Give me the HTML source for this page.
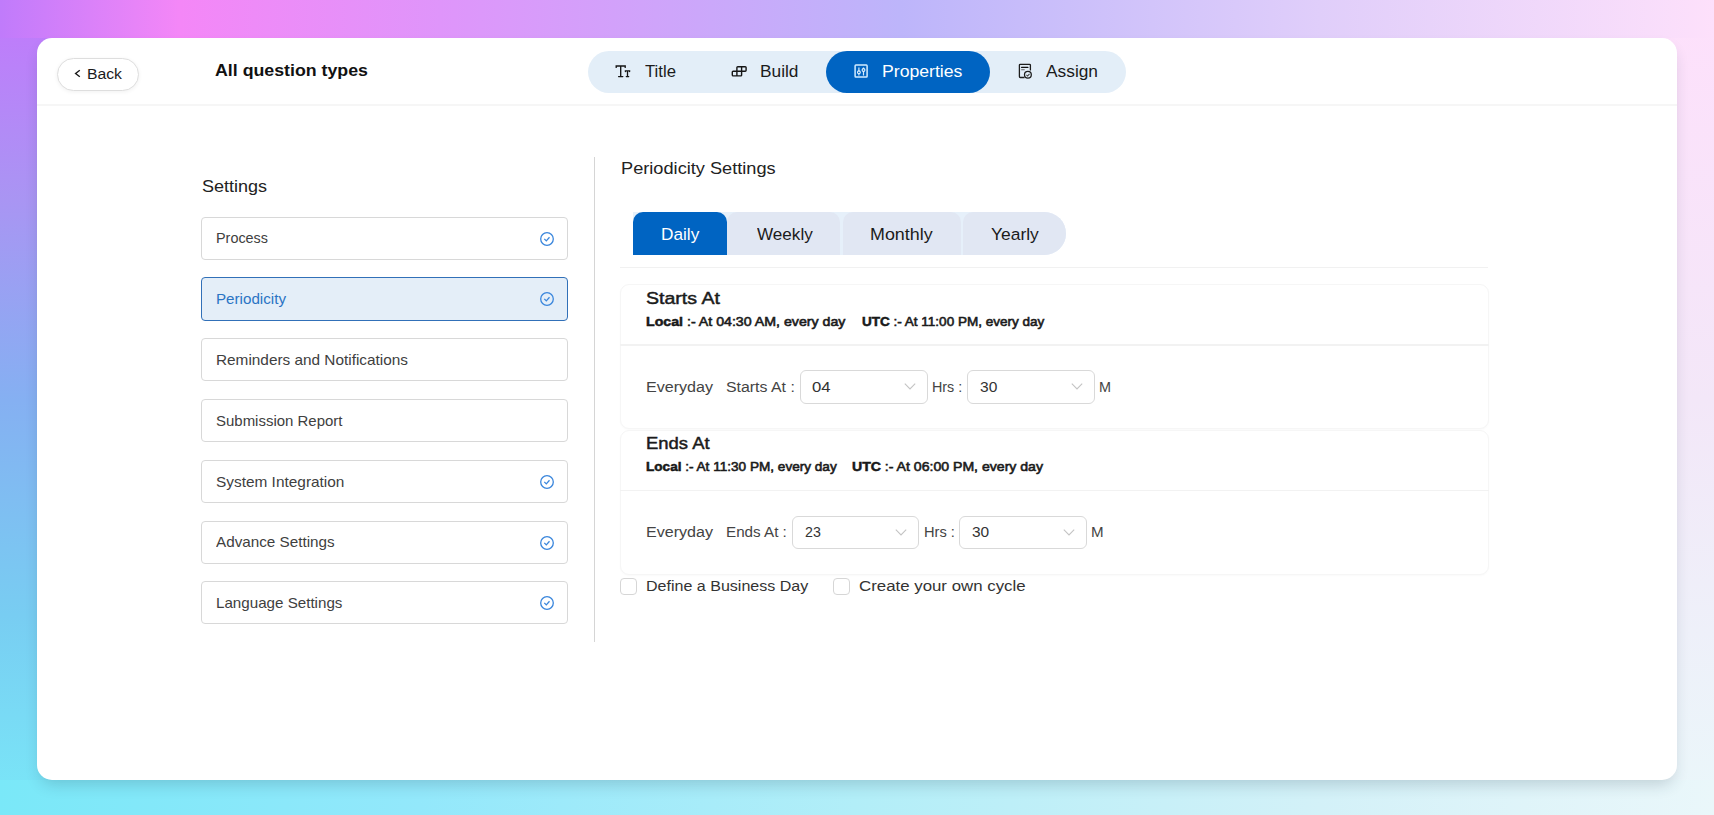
<!DOCTYPE html>
<html><head><meta charset="utf-8">
<style>
*{margin:0;padding:0;box-sizing:border-box}
html,body{width:1714px;height:815px;overflow:hidden}
body{position:relative;font-family:"Liberation Sans",sans-serif;background:#b9b5f5}
.a{position:absolute}
.t{position:absolute;white-space:nowrap;transform-origin:0 0}
#bgT{left:0;top:0;width:1714px;height:38px;background:linear-gradient(90deg,#c07bfb 0px,#f487f7 180px,#df95fa 440px,#bdb5fa 900px,#e0cefa 1320px,#fde0fb 1714px)}
#bgL{left:0;top:0;width:53px;height:815px;background:linear-gradient(180deg,#c07bfb 0px,#c07bfb 20px,#a995f3 200px,#85b0f2 400px,#78cdf2 615px,#7ae8f8 815px)}
#bgR{left:1661px;top:0;width:53px;height:815px;background:linear-gradient(180deg,#fde0fb 0px,#fde0fb 20px,#f3e7f8 400px,#eaf7fa 815px)}
#bgB{left:0;top:780px;width:1714px;height:35px;background:linear-gradient(90deg,#7ae8f8 0px,#93e8fb 420px,#b2eef8 855px,#d3f1f8 1320px,#eaf7fa 1714px)}
#card{left:37px;top:38px;width:1640px;height:742px;background:#fff;border-radius:15px;box-shadow:0 8px 16px -4px rgba(30,50,70,.2)}
.box{position:absolute;left:201px;width:367px;height:43px;border:1px solid #d8d8d8;border-radius:4px;background:#fff}
.sel{position:absolute;height:34px;width:128px;border:1px solid #d9d9d9;border-radius:6px;background:#fff}
.cb{position:absolute;width:17.2px;height:17.2px;border:1px solid #d6d6d6;border-radius:4px;background:#fff}
</style></head><body>
<div id="bgL" class="a"></div><div id="bgR" class="a"></div><div id="bgT" class="a"></div><div id="bgB" class="a"></div>
<div id="card" class="a"></div>
<!-- header -->
<div class="a" style="left:57.2px;top:58.3px;width:82.3px;height:33px;border:1px solid #dedede;border-radius:17px;box-shadow:0 1px 4px rgba(0,0,0,.06);background:#fff"></div>
<svg class="a" style="left:70px;top:66px" width="14" height="16" viewBox="0 0 14 16"><path d="M9.8 4.3 L5.6 7.5 L9.8 10.7" fill="none" stroke="#1b1b1b" stroke-width="1.4"/></svg>
<div class="a" style="left:37px;top:104px;width:1640px;height:2px;background:#f6f6f6"></div>
<div class="a" style="left:588px;top:51px;width:538px;height:42px;border-radius:21px;background:#e3eef8"></div>
<div class="a" style="left:826px;top:51px;width:164px;height:42px;border-radius:21px;background:#0064c2"></div>
<!-- title icon -->
<svg class="a" style="left:610px;top:60px" width="26" height="22" viewBox="0 0 26 22">
<path d="M6.2 7.4 V6 H15.2 V7.4 M10.7 6 V16.6 M8.6 16.6 H12.8" fill="none" stroke="#151515" stroke-width="1.35" stroke-linecap="round"/>
<path d="M15.4 11.6 V10.9 H19.6 V11.6 M17.5 10.9 V16.6 M16.3 16.6 H18.7" fill="none" stroke="#151515" stroke-width="1.3" stroke-linecap="round"/>
</svg>
<!-- build icon -->
<svg class="a" style="left:726px;top:60px" width="26" height="22" viewBox="0 0 26 22">
<path d="M10.9 11.2 V7.6 Q10.9 6.7 11.8 6.7 H19.2 Q20.1 6.7 20.1 7.6 V10.3 Q20.1 11.2 19.2 11.2 H15.6 M15.6 6.7 V15.2 Q15.6 15.9 14.8 15.9 H7.2 Q6.3 15.9 6.3 15 V12.1 Q6.3 11.2 7.2 11.2 H15.6 M10.9 11.2 V15.9" fill="none" stroke="#151515" stroke-width="1.4"/>
</svg>
<!-- properties icon -->
<svg class="a" style="left:848px;top:60px" width="26" height="22" viewBox="0 0 26 22">
<rect x="7.1" y="5.1" width="12" height="12" rx="0.8" fill="none" stroke="#d2ebff" stroke-width="1.5"/>
<path d="M10.9 7.4 V15.5 M15.5 7.4 V15.5" stroke="#d2ebff" stroke-width="1.2"/>
<circle cx="10.9" cy="12.3" r="1.4" fill="#0064c2" stroke="#e8f6ff" stroke-width="1.1"/>
<circle cx="15.5" cy="10" r="1.4" fill="#0064c2" stroke="#e8f6ff" stroke-width="1.1"/>
</svg>
<!-- assign icon -->
<svg class="a" style="left:1012px;top:60px" width="26" height="22" viewBox="0 0 26 22">
<path d="M12.5 17.5 H8.3 Q7.4 17.5 7.4 16.6 V5.1 Q7.4 4.3 8.3 4.3 H17.5 Q18.4 4.3 18.4 5.1 V10.6" fill="none" stroke="#1d1d1d" stroke-width="1.3"/>
<path d="M9.6 7.4 H15.9" stroke="#111" stroke-width="1.2" stroke-linecap="round"/>
<path d="M9.6 9.8 H12.3" stroke="#666" stroke-width="1.1" stroke-linecap="round"/>
<circle cx="15.9" cy="14.8" r="3.4" fill="#e3eef8" stroke="#1d1d1d" stroke-width="1.3"/>
<path d="M14.4 14.9 L15.6 16 L17.5 13.9" fill="none" stroke="#444" stroke-width="1.1"/>
</svg>
<!-- left settings -->
<div class="a" style="left:594px;top:156.8px;width:1px;height:485px;background:#d5d5d5"></div>
<div class="box" style="top:216.5px"></div>
<div class="box" style="top:277px;height:44px;background:#e4eef8;border-color:#3170b8"></div>
<div class="box" style="top:338px"></div>
<div class="box" style="top:399px"></div>
<div class="box" style="top:460px"></div>
<div class="box" style="top:520.5px"></div>
<div class="box" style="top:581px"></div>
<svg class="a" style="left:538px;top:229.8px" width="18" height="18" viewBox="0 0 18 18"><circle cx="9" cy="9" r="6.3" fill="none" stroke="#3a86dc" stroke-width="1.3"/><path d="M6.3 8.9 L8.3 10.9 L11.5 7.3" fill="none" stroke="#3a86dc" stroke-width="1.3"/></svg>
<svg class="a" style="left:538px;top:290.3px" width="18" height="18" viewBox="0 0 18 18"><circle cx="9" cy="9" r="6.3" fill="none" stroke="#3a86dc" stroke-width="1.3"/><path d="M6.3 8.9 L8.3 10.9 L11.5 7.3" fill="none" stroke="#3a86dc" stroke-width="1.3"/></svg>
<svg class="a" style="left:538px;top:473.3px" width="18" height="18" viewBox="0 0 18 18"><circle cx="9" cy="9" r="6.3" fill="none" stroke="#3a86dc" stroke-width="1.3"/><path d="M6.3 8.9 L8.3 10.9 L11.5 7.3" fill="none" stroke="#3a86dc" stroke-width="1.3"/></svg>
<svg class="a" style="left:538px;top:533.8px" width="18" height="18" viewBox="0 0 18 18"><circle cx="9" cy="9" r="6.3" fill="none" stroke="#3a86dc" stroke-width="1.3"/><path d="M6.3 8.9 L8.3 10.9 L11.5 7.3" fill="none" stroke="#3a86dc" stroke-width="1.3"/></svg>
<svg class="a" style="left:538px;top:594.3px" width="18" height="18" viewBox="0 0 18 18"><circle cx="9" cy="9" r="6.3" fill="none" stroke="#3a86dc" stroke-width="1.3"/><path d="M6.3 8.9 L8.3 10.9 L11.5 7.3" fill="none" stroke="#3a86dc" stroke-width="1.3"/></svg>

<!-- right -->
<div class="a" style="left:633px;top:212px;width:433px;height:43px;border-radius:0 21.5px 21.5px 0;background:#e6f0fa"></div>
<div class="a" style="left:633px;top:212px;width:94px;height:43px;border-radius:10px 10px 0 0;background:#0064c2"></div>
<div class="a" style="left:727px;top:212px;width:113px;height:43px;border-radius:10px 10px 0 0;background:#e1e7f3"></div>
<div class="a" style="left:843px;top:212px;width:117.5px;height:43px;border-radius:10px 10px 0 0;background:#e1e7f3"></div>
<div class="a" style="left:962.5px;top:212px;width:103.5px;height:43px;border-radius:10px 21.5px 21.5px 0;background:#e1e7f3"></div>
<div class="a" style="left:620px;top:266.7px;width:868px;height:1.5px;background:#f1f1f1"></div>
<div class="a" style="left:620px;top:283.8px;width:869px;height:145px;border:1px solid #f6f6f6;border-radius:9px;box-shadow:0 1px 2px rgba(0,0,0,.025);background:#fff"></div>
<div class="a" style="left:620px;top:344.3px;width:869px;height:1.5px;background:#f2f2f2"></div>
<div class="a" style="left:620px;top:430.3px;width:869px;height:145px;border:1px solid #f6f6f6;border-radius:9px;box-shadow:0 1px 2px rgba(0,0,0,.025);background:#fff"></div>
<div class="a" style="left:620px;top:489.5px;width:869px;height:1.5px;background:#f2f2f2"></div>
<div class="sel" style="left:800px;top:370px;width:127.5px;height:33.5px"></div>
<div class="sel" style="left:967px;top:370px;width:127.5px;height:33.5px"></div>
<div class="sel" style="left:791.5px;top:515.8px;width:127.5px;height:33.5px"></div>
<div class="sel" style="left:959px;top:515.8px;width:127.5px;height:33.5px"></div>
<svg class="a" style="left:902.5px;top:381.3px" width="14" height="12" viewBox="0 0 14 12"><path d="M1.8 2.6 L7 8 L12.2 2.6" fill="none" stroke="#c4c4c4" stroke-width="1.1"/></svg>
<svg class="a" style="left:1070px;top:381.3px" width="14" height="12" viewBox="0 0 14 12"><path d="M1.8 2.6 L7 8 L12.2 2.6" fill="none" stroke="#c4c4c4" stroke-width="1.1"/></svg>
<svg class="a" style="left:894px;top:527px" width="14" height="12" viewBox="0 0 14 12"><path d="M1.8 2.6 L7 8 L12.2 2.6" fill="none" stroke="#c4c4c4" stroke-width="1.1"/></svg>
<svg class="a" style="left:1061.5px;top:527px" width="14" height="12" viewBox="0 0 14 12"><path d="M1.8 2.6 L7 8 L12.2 2.6" fill="none" stroke="#c4c4c4" stroke-width="1.1"/></svg>

<div class="cb" style="left:620px;top:578px"></div>
<div class="cb" style="left:833px;top:578px"></div>
<div class="t" id="t0" style="left:87.0px;top:66.59px;font-size:14.9px;line-height:14.9px;font-weight:400;color:#1b1b1b;transform:scaleX(1.0571);">Back</div>
<div class="t" id="t1" style="left:215.0px;top:61.91px;font-size:17px;line-height:17px;font-weight:700;color:#111;transform:scaleX(1.0449);">All question types</div>
<div class="t" id="t2" style="left:645.0px;top:63.29px;font-size:16.2px;line-height:16.2px;font-weight:400;color:#1b1b1b;transform:scaleX(1.0339);">Title</div>
<div class="t" id="t3" style="left:760.0px;top:63.29px;font-size:16.2px;line-height:16.2px;font-weight:400;color:#1b1b1b;transform:scaleX(1.0694);">Build</div>
<div class="t" id="t4" style="left:882.0px;top:63.29px;font-size:16.2px;line-height:16.2px;font-weight:400;color:#ffffff;transform:scaleX(1.0897);">Properties</div>
<div class="t" id="t5" style="left:1046.0px;top:63.29px;font-size:16.2px;line-height:16.2px;font-weight:400;color:#1b1b1b;transform:scaleX(1.0701);">Assign</div>
<div class="t" id="t6" style="left:201.7px;top:178.09px;font-size:16.2px;line-height:16.2px;font-weight:400;color:#222;transform:scaleX(1.1128);">Settings</div>
<div class="t" id="t7" style="left:216.0px;top:232.33px;font-size:13.9px;line-height:13.9px;font-weight:400;color:#404040;transform:scaleX(1.0361);">Process</div>
<div class="t" id="t8" style="left:216.0px;top:292.83px;font-size:13.9px;line-height:13.9px;font-weight:400;color:#2b74c4;transform:scaleX(1.0924);">Periodicity</div>
<div class="t" id="t9" style="left:216.0px;top:353.83px;font-size:13.9px;line-height:13.9px;font-weight:400;color:#404040;transform:scaleX(1.1052);">Reminders and Notifications</div>
<div class="t" id="t10" style="left:216.0px;top:414.83px;font-size:13.9px;line-height:13.9px;font-weight:400;color:#404040;transform:scaleX(1.0779);">Submission Report</div>
<div class="t" id="t11" style="left:216.0px;top:475.83px;font-size:13.9px;line-height:13.9px;font-weight:400;color:#404040;transform:scaleX(1.1087);">System Integration</div>
<div class="t" id="t12" style="left:216.0px;top:536.33px;font-size:13.9px;line-height:13.9px;font-weight:400;color:#404040;transform:scaleX(1.0970);">Advance Settings</div>
<div class="t" id="t13" style="left:216.0px;top:596.83px;font-size:13.9px;line-height:13.9px;font-weight:400;color:#404040;transform:scaleX(1.0910);">Language Settings</div>
<div class="t" id="t14" style="left:621.0px;top:161.01px;font-size:15.7px;line-height:15.7px;font-weight:400;color:#222;transform:scaleX(1.1596);">Periodicity Settings</div>
<div class="t" id="t15" style="left:660.8px;top:225.70px;font-size:16.3px;line-height:16.3px;font-weight:400;color:#ffffff;transform:scaleX(1.0579);">Daily</div>
<div class="t" id="t16" style="left:756.6px;top:225.70px;font-size:16.3px;line-height:16.3px;font-weight:400;color:#1b1b1b;transform:scaleX(1.0510);">Weekly</div>
<div class="t" id="t17" style="left:870.0px;top:225.70px;font-size:16.3px;line-height:16.3px;font-weight:400;color:#1b1b1b;transform:scaleX(1.0979);">Monthly</div>
<div class="t" id="t18" style="left:990.7px;top:225.70px;font-size:16.3px;line-height:16.3px;font-weight:400;color:#1b1b1b;transform:scaleX(1.0704);">Yearly</div>
<div class="t" id="t19" style="left:646.4px;top:289.90px;font-size:16.3px;line-height:16.3px;font-weight:400;color:#1b1b1b;transform:scaleX(1.2010);-webkit-text-stroke:0.45px #1b1b1b">Starts At</div>
<div class="t" id="t20" style="left:646.4px;top:315.43px;font-size:13.2px;line-height:13.2px;font-weight:400;color:#1b1b1b;transform:scaleX(1.0752);-webkit-text-stroke:0.6px #1b1b1b"><b style="font-weight:700;-webkit-text-stroke:0.5px #111">Local</b> :- At 04:30 AM, every day</div>
<div class="t" id="t21" style="left:861.7px;top:315.43px;font-size:13.2px;line-height:13.2px;font-weight:400;color:#1b1b1b;transform:scaleX(1.0250);-webkit-text-stroke:0.6px #1b1b1b"><b style="font-weight:700;-webkit-text-stroke:0.5px #111">UTC</b> :- At 11:00 PM, every day</div>
<div class="t" id="t22" style="left:646.0px;top:379.13px;font-size:15.2px;line-height:15.2px;font-weight:400;color:#444;transform:scaleX(1.0582);">Everyday</div>
<div class="t" id="t23" style="left:726.4px;top:379.13px;font-size:15.2px;line-height:15.2px;font-weight:400;color:#444;transform:scaleX(1.0449);">Starts At :</div>
<div class="t" id="t24" style="left:812.4px;top:379.13px;font-size:15.2px;line-height:15.2px;font-weight:400;color:#333;transform:scaleX(1.1002);">04</div>
<div class="t" id="t25" style="left:932.3px;top:379.13px;font-size:15.2px;line-height:15.2px;font-weight:400;color:#444;transform:scaleX(0.9419);">Hrs :</div>
<div class="t" id="t26" style="left:979.7px;top:379.13px;font-size:15.2px;line-height:15.2px;font-weight:400;color:#333;transform:scaleX(1.0233);">30</div>
<div class="t" id="t27" style="left:1099.0px;top:379.13px;font-size:15.2px;line-height:15.2px;font-weight:400;color:#444;transform:scaleX(0.9481);">M</div>
<div class="t" id="t28" style="left:646.3px;top:435.00px;font-size:16.3px;line-height:16.3px;font-weight:400;color:#1b1b1b;transform:scaleX(1.1332);-webkit-text-stroke:0.45px #1b1b1b">Ends At</div>
<div class="t" id="t29" style="left:646.3px;top:460.33px;font-size:13.2px;line-height:13.2px;font-weight:400;color:#1b1b1b;transform:scaleX(1.0297);-webkit-text-stroke:0.6px #1b1b1b"><b style="font-weight:700;-webkit-text-stroke:0.5px #111">Local</b> :- At 11:30 PM, every day</div>
<div class="t" id="t30" style="left:852.0px;top:460.33px;font-size:13.2px;line-height:13.2px;font-weight:400;color:#1b1b1b;transform:scaleX(1.0680);-webkit-text-stroke:0.6px #1b1b1b"><b style="font-weight:700;-webkit-text-stroke:0.5px #111">UTC</b> :- At 06:00 PM, every day</div>
<div class="t" id="t31" style="left:646.0px;top:524.03px;font-size:15.2px;line-height:15.2px;font-weight:400;color:#444;transform:scaleX(1.0582);">Everyday</div>
<div class="t" id="t32" style="left:726.2px;top:524.03px;font-size:15.2px;line-height:15.2px;font-weight:400;color:#444;transform:scaleX(1.0001);">Ends At :</div>
<div class="t" id="t33" style="left:805.2px;top:524.03px;font-size:15.2px;line-height:15.2px;font-weight:400;color:#333;transform:scaleX(0.9346);">23</div>
<div class="t" id="t34" style="left:923.7px;top:524.03px;font-size:15.2px;line-height:15.2px;font-weight:400;color:#444;transform:scaleX(0.9637);">Hrs :</div>
<div class="t" id="t35" style="left:971.8px;top:524.03px;font-size:15.2px;line-height:15.2px;font-weight:400;color:#333;transform:scaleX(1.0174);">30</div>
<div class="t" id="t36" style="left:1091.4px;top:524.03px;font-size:15.2px;line-height:15.2px;font-weight:400;color:#444;transform:scaleX(0.9956);">M</div>
<div class="t" id="t37" style="left:646.3px;top:578.43px;font-size:15.2px;line-height:15.2px;font-weight:400;color:#333;transform:scaleX(1.0564);">Define a Business Day</div>
<div class="t" id="t38" style="left:859.4px;top:578.43px;font-size:15.2px;line-height:15.2px;font-weight:400;color:#333;transform:scaleX(1.1087);">Create your own cycle</div>
</body></html>
